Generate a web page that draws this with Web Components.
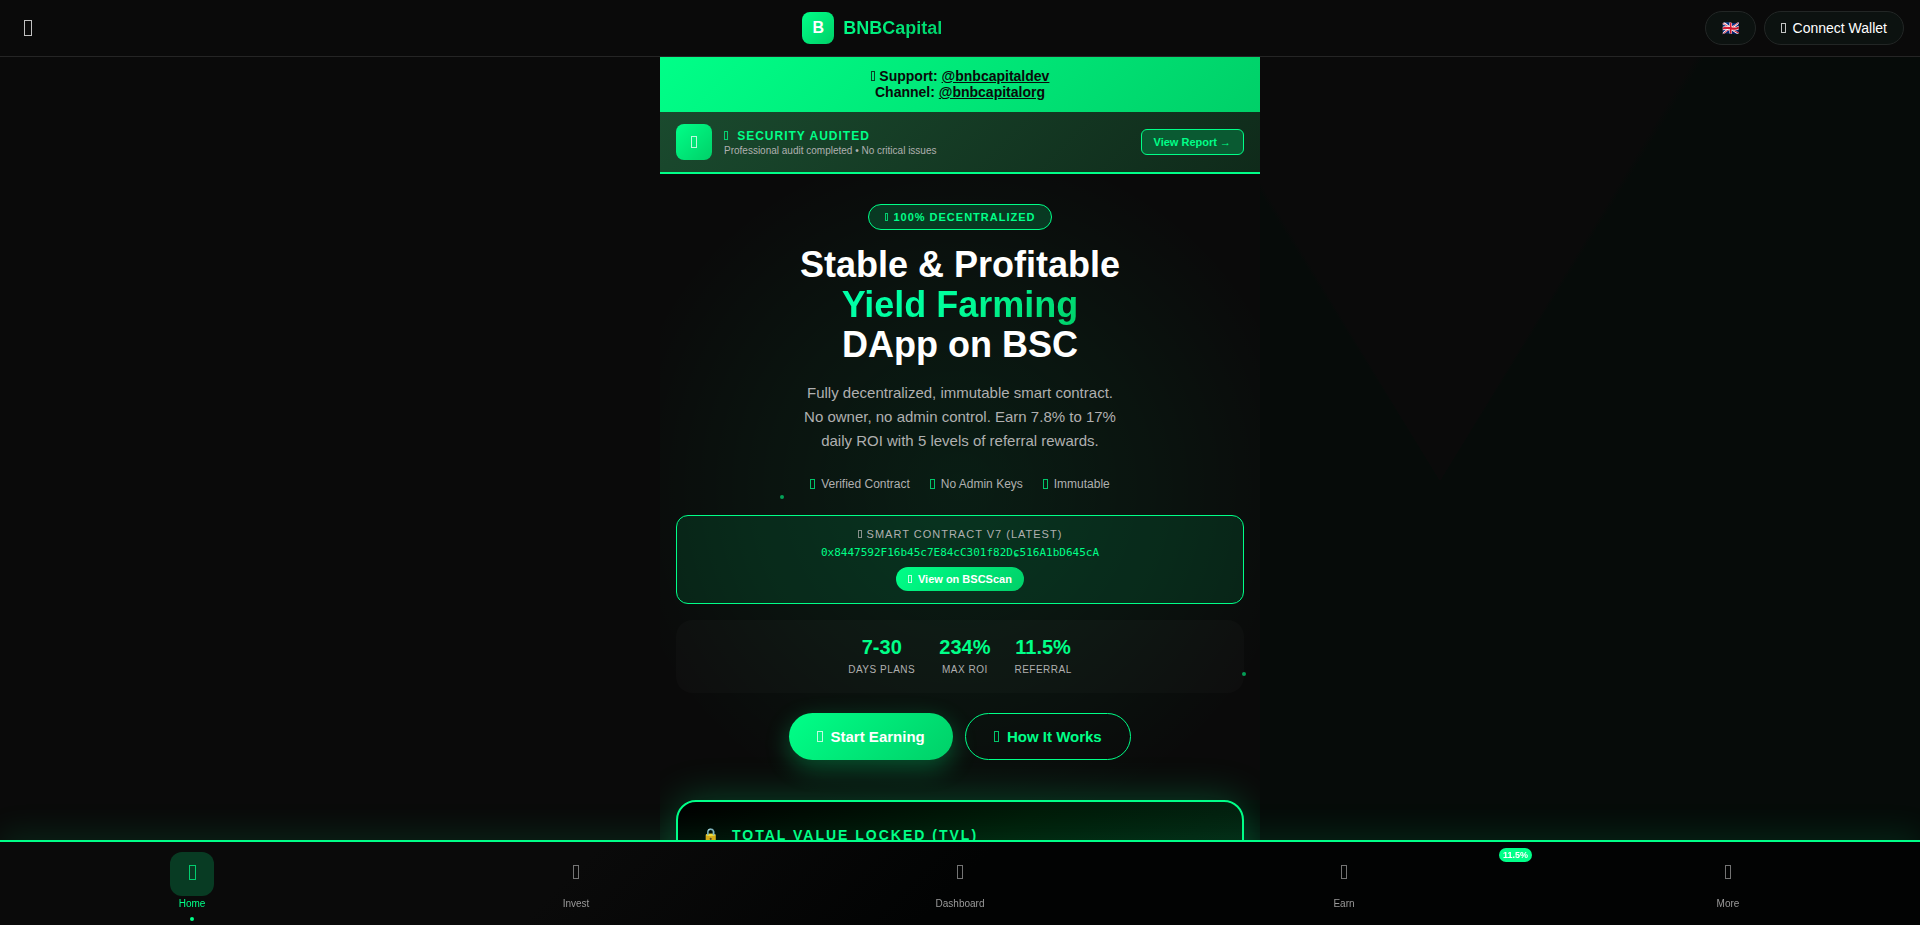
<!DOCTYPE html>
<html lang="en">
<head>
<meta charset="utf-8">
<title>BNBCapital</title>
<style>
html { background: #0a0a0a; }
body { margin: 0; min-height: 100vh; color: #fff; font-family: "Liberation Sans", Arial, sans-serif; background: linear-gradient(90deg, #0a0a0a 50%, transparent 50%), conic-gradient(from -31deg at 75% 52%, #0a0a0a 62deg, #060b09 63deg 359deg, #0a0a0a); --green: #00ff88; --deep: #00d068; --grad: linear-gradient(135deg, #00ff88, #00d068); --muted: #b0b0b0; }
</style>
</head>
<body>
<bnb-app></bnb-app>
<script>
const define = (name, html, setup) => customElements.define(name, class extends HTMLElement {
  connectedCallback() {
    if (this.shadowRoot) return;
    const t = document.createElement('template');
    t.innerHTML = html;
    this.attachShadow({ mode: 'open' }).append(t.content.cloneNode(true));
    if (setup) setup(this);
  }
});

define('bnb-icon', `<style>
:host { display: inline-block; flex: none; box-sizing: border-box; width: .35em; height: .75em; border: 1px solid currentColor; opacity: .75; }
</style>`);

define('bnb-header', `<style>
:host { position: fixed; inset: 0 0 auto; z-index: 5; display: block; background: #0a0a0a; border-bottom: 1px solid #252525; }
header { display: flex; justify-content: space-between; align-items: center; height: 56px; padding: 0 16px; }
button { font: 14px "Liberation Sans", Arial, sans-serif; color: #fff; cursor: pointer; }
.menu { display: flex; border: 0; background: none; font-size: 22px; padding: 8px; }
.brand { display: flex; align-items: center; gap: 9px; font-size: 18px; font-weight: 700; text-decoration: none; color: transparent; }
.mark { width: 32px; height: 32px; border-radius: 8px; background: var(--grad); color: #fff; display: grid; place-items: center; font-size: 16px; }
.name { background: var(--grad); background-clip: text; -webkit-background-clip: text; }
.tools { display: flex; gap: 8px; }
.tools button { height: 34px; padding: 0 16px; border: 1px solid #222625; border-radius: 20px; background: #0c1210; display: flex; align-items: center; gap: 7px; }
</style><header>
<button class="menu" aria-label="Menu"><bnb-icon></bnb-icon></button>
<a class="brand" href="#"><span class="mark">B</span><span class="name">BNBCapital</span></a>
<div class="tools"><button aria-label="Language">🇬🇧</button><button><bnb-icon></bnb-icon><span>Connect Wallet</span></button></div>
</header>`);

define('bnb-support', `<style>
:host { display: block; padding: 12px 16px; background: var(--grad); color: #0a0a0a; font-size: 14px; font-weight: 700; line-height: 16px; text-align: center; }
a { color: inherit; }
</style><div><bnb-icon></bnb-icon> Support: <a href="#">@bnbcapitaldev</a></div><div>Channel: <a href="#">@bnbcapitalorg</a></div>`);

define('bnb-audit', `<style>
:host { display: flex; align-items: center; gap: 12px; padding: 12px 16px; border-bottom: 2px solid var(--green); background: linear-gradient(135deg, #1a4a2e, #0f2a1a); }
.shield { width: 36px; height: 36px; border-radius: 8px; background: var(--grad); display: grid; place-items: center; font-size: 16px; }
.text { flex: 1; }
.title { display: flex; align-items: center; gap: 9px; color: var(--green); font-size: 12px; font-weight: 700; line-height: 14px; letter-spacing: 1px; }
.sub { margin-top: 2px; color: var(--muted); font-size: 10px; line-height: 11px; }
a { display: block; padding: 6px 12px; border: 1px solid var(--green); border-radius: 6px; background: #0a5a32; color: var(--green); font-size: 11px; font-weight: 700; line-height: 12px; text-decoration: none; }
</style><div class="shield"><bnb-icon></bnb-icon></div>
<div class="text"><div class="title"><bnb-icon></bnb-icon><span>SECURITY AUDITED</span></div><div class="sub">Professional audit completed • No critical issues</div></div>
<a href="#">View Report →</a>`);

define('bnb-contract', `<style>
:host { display: block; margin-top: 24px; padding: 12px; border: 1px solid var(--green); border-radius: 12px; background: rgba(0,255,136,.1); text-align: center; }
.label { font-size: 11px; line-height: 13px; letter-spacing: 1px; color: var(--muted); }
.label bnb-icon { margin-right: 1px; }
.addr { margin: 5px 0 4px; font: 11px/13px "DejaVu Sans Mono", monospace; color: var(--green); }
a { display: inline-flex; align-items: center; gap: 6px; height: 24px; padding: 0 12px; margin-top: 4px; border-radius: 15px; background: var(--grad); color: #fff; font-size: 11px; font-weight: 700; text-decoration: none; vertical-align: top; }
</style><div class="label"><bnb-icon></bnb-icon> SMART CONTRACT V7 (LATEST)</div>
<div class="addr">0x8447592F16b45c7E84cC301f82Dc516A1bD645cA</div>
<a href="#"><bnb-icon></bnb-icon><span>View on BSCScan</span></a>`);

define('bnb-stat', `<style>
:host { display: block; text-align: center; }
.v { font-size: 20px; line-height: 22px; font-weight: 700; color: var(--green); }
.l { margin-top: 4px; font-size: 10px; line-height: 15px; letter-spacing: .05em; color: var(--muted); }
</style><div class="v"><slot name="value"></slot></div><div class="l"><slot></slot></div>`);

define('bnb-hero', `<style>
:host { display: block; position: relative; padding: 30px 16px 40px; text-align: center; background: radial-gradient(circle at 50% 50%, rgba(0,255,136,.08), rgba(0,255,136,.04) 45%, transparent 80%), #0a0a0a; }
.badge { display: inline-block; padding: 6px 16px; border: 1px solid var(--green); border-radius: 20px; background: rgba(0,255,136,.18); color: var(--green); font-size: 11px; line-height: 12px; font-weight: 700; letter-spacing: 1px; vertical-align: top; }
.badge bnb-icon { margin-right: 1px; }
h1 { margin: 15px 0 0; font-size: 36px; line-height: 40px; font-weight: 700; }
h1 span { background: linear-gradient(135deg, #00ffaa 0%, #00ff99 50%, #00d068 100%); background-clip: text; -webkit-background-clip: text; color: transparent; }
p { max-width: 320px; margin: 16px auto 0; color: var(--muted); font-size: 15px; line-height: 24px; }
.trust { display: flex; justify-content: center; gap: 20px; margin-top: 24px; color: var(--muted); font-size: 12px; line-height: 14px; }
.trust div { display: flex; align-items: center; gap: 6px; }
.trust bnb-icon { color: var(--green); font-size: 14px; }
.stats { display: flex; justify-content: center; gap: 24px; margin-top: 16px; padding: 16px; border-radius: 16px; background: rgba(255,255,255,.02); }
.cta { display: flex; justify-content: center; gap: 12px; margin-top: 20px; }
button { display: flex; align-items: center; gap: 8px; padding: 14px 28px; border: 1px solid transparent; border-radius: 25px; font: 700 15px/17px "Liberation Sans", Arial, sans-serif; cursor: pointer; }
.go { border: 0; padding: 15px 28px; background: var(--grad); color: #fff; box-shadow: 0 8px 24px rgba(0,255,136,.3); }
.how { background: none; border-color: var(--green); color: var(--green); }
.spark { position: absolute; width: 4px; height: 4px; border-radius: 50%; background: var(--green); opacity: .6; }
.s1 { left: 20%; top: 321px; } .s2 { left: 59%; top: 379px; } .s3 { left: 97%; top: 498px; }
</style>
<div class="badge"><bnb-icon></bnb-icon> 100% DECENTRALIZED</div>
<h1>Stable &amp; Profitable<br><span>Yield Farming</span><br>DApp on BSC</h1>
<p>Fully decentralized, immutable smart contract. No owner, no admin control. Earn 7.8% to 17% daily ROI with 5 levels of referral rewards.</p>
<div class="trust"><div><bnb-icon></bnb-icon><span>Verified Contract</span></div><div><bnb-icon></bnb-icon><span>No Admin Keys</span></div><div><bnb-icon></bnb-icon><span>Immutable</span></div></div>
<bnb-contract></bnb-contract>
<div class="stats"><bnb-stat><span slot="value">7-30</span>DAYS PLANS</bnb-stat><bnb-stat><span slot="value">234%</span>MAX ROI</bnb-stat><bnb-stat><span slot="value">11.5%</span>REFERRAL</bnb-stat></div>
<div class="cta"><button class="go"><bnb-icon></bnb-icon><span>Start Earning</span></button><button class="how"><bnb-icon></bnb-icon><span>How It Works</span></button></div>
<i class="spark s1"></i><i class="spark s2"></i><i class="spark s3"></i>`);

define('bnb-tvl', `<style>
:host { display: block; position: relative; margin: 0 16px; padding: 24px; min-height: 120px; border: 2px solid var(--green); border-radius: 20px; background: linear-gradient(135deg, #000 0%, #001a08 50%, #062414 100%); box-shadow: 0 0 40px rgba(0,255,136,.25); }
h2 { display: flex; align-items: center; gap: 11px; margin: 0; font-size: 14px; line-height: 18px; font-weight: 700; letter-spacing: 2px; color: var(--green); }
</style><h2><span>🔒</span><span>TOTAL VALUE LOCKED (TVL)</span></h2>`);

define('bnb-tab', `<style>
:host { position: relative; flex: 1; display: block; }
a { display: flex; flex-direction: column; align-items: center; color: #9a9a9a; font-size: 10px; line-height: 12px; text-decoration: none; }
.box { box-sizing: border-box; width: 44px; height: 44px; margin-bottom: 2px; padding-bottom: 4px; border-radius: 12px; display: grid; place-items: center; font-size: 18px; }
:host([active]) a { color: var(--green); }
:host([active]) .box { background: rgba(0,255,136,.2); font-size: 20px; }
:host([active]) a::after { content: ""; width: 4px; height: 4px; margin-top: 7px; border-radius: 50%; background: var(--green); }
.tag { position: absolute; top: -4px; right: 4px; padding: 2px 4px; border-radius: 8px; background: var(--green); color: #fff; font-size: 9px; line-height: 10px; font-weight: 700; }
</style><a href="#"><span class="box"><bnb-icon></bnb-icon></span><slot></slot></a>`, el => {
  if (!el.hasAttribute('badge')) return;
  const tag = document.createElement('span');
  tag.className = 'tag';
  tag.textContent = el.getAttribute('badge');
  el.shadowRoot.append(tag);
});

define('bnb-nav', `<style>
:host { position: fixed; inset: auto 0 0; z-index: 5; display: block; border-top: 2px solid var(--green); background: linear-gradient(135deg, #0a0a0a 30%, #020303 50%); box-shadow: 0 -8px 32px rgba(0,255,136,.1); }
nav { display: flex; height: 73px; padding-top: 10px; }
</style><nav><bnb-tab active>Home</bnb-tab><bnb-tab>Invest</bnb-tab><bnb-tab>Dashboard</bnb-tab><bnb-tab badge="11.5%">Earn</bnb-tab><bnb-tab>More</bnb-tab></nav>`);

define('bnb-app', `<style>
:host { display: block; height: 100vh; overflow: hidden; }
main { max-width: 600px; min-height: 100vh; box-sizing: border-box; margin: 0 auto; padding-top: 56px; overflow: hidden; }
</style><bnb-header></bnb-header><main><bnb-support></bnb-support><bnb-audit></bnb-audit><bnb-hero></bnb-hero><bnb-tvl></bnb-tvl></main><bnb-nav></bnb-nav>`);
</script>
</body>
</html>
